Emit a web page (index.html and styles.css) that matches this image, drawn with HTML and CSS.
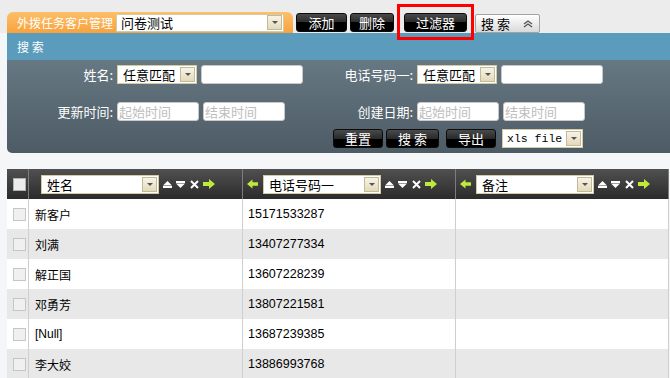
FILE: index.html
```html
<!DOCTYPE html>
<html lang="zh-CN">
<head>
    <meta charset="UTF-8" />
    <title>外拨任务客户管理</title>
    <link rel="stylesheet" href="styles.css">
</head>
<body>
    <!-- Top bar -->
    <div class="topbar">
        <div class="tab">
            <span class="tab-title">外拨任务客户管理</span>
            <div class="combo combo-task"><span class="combo-text">问卷测试</span><span class="combo-btn"></span></div>
        </div>
        <button class="btn btn-add">添加</button>
        <button class="btn btn-del">删除</button>
        <button class="btn btn-filter">过滤器</button>
        <div class="toggle">
            <span>搜 索</span>
            <svg width="10" height="8" viewBox="0 0 10 8"><path d="M1 4L5 1L9 4M1 7L5 4L9 7" fill="none" stroke="#555" stroke-width="1.4"/></svg>
        </div>
        <div class="highlight"></div>
    </div>

    <!-- Search panel -->
    <div class="searchbar">搜 索</div>
    <div class="panel">
        <div class="form-row">
            <span class="lbl">姓名:</span>
            <div class="fields">
                <div class="combo combo-match"><span class="combo-text">任意匹配</span><span class="combo-btn"></span></div>
                <div class="text-box"></div>
            </div>
            <span class="lbl">电话号码一:</span>
            <div class="fields">
                <div class="combo combo-match"><span class="combo-text">任意匹配</span><span class="combo-btn"></span></div>
                <div class="text-box"></div>
            </div>
        </div>
        <div class="form-row">
            <span class="lbl">更新时间:</span>
            <div class="fields">
                <div class="date-box">起始时间</div>
                <div class="date-box">结束时间</div>
            </div>
            <span class="lbl">创建日期:</span>
            <div class="fields">
                <div class="date-box">起始时间</div>
                <div class="date-box">结束时间</div>
            </div>
        </div>
        <div class="form-row actions">
            <button class="btn btn-reset">重置</button>
            <button class="btn btn-search">搜 索</button>
            <button class="btn btn-export">导出</button>
            <div class="combo combo-file"><span class="combo-text">xls file</span><span class="combo-btn"></span></div>
        </div>
    </div>

    <!-- Data grid -->
    <div class="grid">
        <div class="grid-row grid-head">
            <div><span class="check"></span></div>
            <div class="head-cell first">
                <div class="combo combo-col"><span class="combo-text">姓名</span><span class="combo-btn"></span></div>
                <svg class="ico" width="9" height="7" viewBox="0 0 9 7"><path d="M0 4.5L4.5 0L9 4.5Z" fill="#fff"/><rect y="5" width="9" height="2" fill="#fff"/></svg>
                <svg class="ico" width="9" height="7" viewBox="0 0 9 7"><rect width="9" height="2" fill="#fff"/><path d="M0 2.5L9 2.5L4.5 7Z" fill="#fff"/></svg>
                <svg class="ico x" width="9" height="9" viewBox="0 0 9 9"><path d="M1 1L8 8M8 1L1 8" stroke="#fff" stroke-width="2"/></svg>
                <svg class="ico" width="12" height="10" viewBox="0 0 12 10"><path d="M0 3H6V0L12 5L6 10V7H0Z" fill="#bfe93c"/></svg>
            </div>
            <div class="head-cell">
                <svg width="11" height="10" viewBox="0 0 12 10"><path d="M12 3H6V0L0 5L6 10V7H12Z" fill="#bfe93c"/></svg>
                <div class="combo combo-col"><span class="combo-text">电话号码一</span><span class="combo-btn"></span></div>
                <svg class="ico" width="9" height="7" viewBox="0 0 9 7"><path d="M0 4.5L4.5 0L9 4.5Z" fill="#fff"/><rect y="5" width="9" height="2" fill="#fff"/></svg>
                <svg class="ico" width="9" height="7" viewBox="0 0 9 7"><rect width="9" height="2" fill="#fff"/><path d="M0 2.5L9 2.5L4.5 7Z" fill="#fff"/></svg>
                <svg class="ico x" width="9" height="9" viewBox="0 0 9 9"><path d="M1 1L8 8M8 1L1 8" stroke="#fff" stroke-width="2"/></svg>
                <svg class="ico" width="12" height="10" viewBox="0 0 12 10"><path d="M0 3H6V0L12 5L6 10V7H0Z" fill="#bfe93c"/></svg>
            </div>
            <div class="head-cell">
                <svg width="11" height="10" viewBox="0 0 12 10"><path d="M12 3H6V0L0 5L6 10V7H12Z" fill="#bfe93c"/></svg>
                <div class="combo combo-col"><span class="combo-text">备注</span><span class="combo-btn"></span></div>
                <svg class="ico" width="9" height="7" viewBox="0 0 9 7"><path d="M0 4.5L4.5 0L9 4.5Z" fill="#fff"/><rect y="5" width="9" height="2" fill="#fff"/></svg>
                <svg class="ico" width="9" height="7" viewBox="0 0 9 7"><rect width="9" height="2" fill="#fff"/><path d="M0 2.5L9 2.5L4.5 7Z" fill="#fff"/></svg>
                <svg class="ico x" width="9" height="9" viewBox="0 0 9 9"><path d="M1 1L8 8M8 1L1 8" stroke="#fff" stroke-width="2"/></svg>
                <svg class="ico" width="12" height="10" viewBox="0 0 12 10"><path d="M0 3H6V0L12 5L6 10V7H0Z" fill="#bfe93c"/></svg>
            </div>
        </div>
        <div class="grid-row"><div><span class="check"></span></div><div class="name">新客户</div><div class="phone">15171533287</div><div></div></div>
        <div class="grid-row alt"><div><span class="check"></span></div><div class="name">刘满</div><div class="phone">13407277334</div><div></div></div>
        <div class="grid-row"><div><span class="check"></span></div><div class="name">解正国</div><div class="phone">13607228239</div><div></div></div>
        <div class="grid-row alt"><div><span class="check"></span></div><div class="name">邓勇芳</div><div class="phone">13807221581</div><div></div></div>
        <div class="grid-row"><div><span class="check"></span></div><div class="name latin">[Null]</div><div class="phone">13687239385</div><div></div></div>
        <div class="grid-row alt"><div><span class="check"></span></div><div class="name">李大姣</div><div class="phone">13886993768</div><div></div></div>
    </div>
</body>
</html>
```

FILE: styles.css
```css
/* Basic Styling */
* { box-sizing: border-box; }
body {
    margin: 0;
    background-color: #f4f6f7;
    color: #000;
    font-family: "Noto Sans CJK SC", "Liberation Sans", sans-serif;
    font-size: 12px;
    overflow: hidden;
}

/* Top bar */
.topbar {
    position: relative;
    display: flex;
    align-items: flex-start;
    height: 33px;
    padding: 12px 0 0 7px;
    background-color: #ececec;
}
.tab {
    display: flex;
    align-items: center;
    width: 286px;
    height: 21px;
    padding: 0 9px 0 10px;
    border-radius: 6px 6px 0 0;
    background: linear-gradient(#fdbf68, #f8a23e);
}
.tab-title {
    width: 99px;
    color: #fff;
    font-size: 12px;
    line-height: 15px;
    white-space: nowrap;
}

/* Combo boxes */
.combo {
    display: flex;
    align-items: center;
    height: 19px;
    padding: 1px;
    border: 1px solid #d3cba6;
    background-color: #fff;
    color: #000;
}
.combo-text {
    flex: 1;
    min-width: 0;
    padding-left: 3px;
    font-size: 13px;
    line-height: 15px;
    white-space: nowrap;
}
.combo-btn {
    display: flex;
    flex: none;
    align-items: center;
    justify-content: center;
    width: 15px;
    height: 15px;
    border: 1px solid #c4ba96;
    background: linear-gradient(#f8f3e6, #e3d9bc);
}
.combo-btn::after {
    content: "";
    border-left: 3px solid transparent;
    border-right: 3px solid transparent;
    border-top: 3px solid #555;
}
.combo-task { width: 168px; height: 18px; }
.combo-match { width: 80px; }
.combo-match .combo-text { padding-left: 4px; }
.combo-file { width: 81px; margin-left: 6px; }
.combo-file .combo-text { font-family: "Liberation Mono", monospace; font-size: 11.5px; padding-left: 3px; }
.combo-col { width: 118px; }
.combo-col .combo-text { padding-left: 4px; }

/* Buttons */
.btn {
    height: 19px;
    padding: 0;
    border: 1px solid #0c0c0c;
    border-radius: 3px;
    background: linear-gradient(#4a4a4a 0%, #2a2a2a 50%, #000 50%, #000 100%);
    color: #fff;
    font-family: inherit;
    font-size: 13px;
    line-height: 1;
    cursor: pointer;
}
.btn:hover { background: #333; }
.topbar .btn { margin-top: 1px; }
.btn-add { width: 51px; margin-left: 3px; }
.btn-del { width: 44px; margin-left: 3px; }
.btn-filter { width: 63px; margin-left: 10px; }
.btn-reset { width: 50px; }
.btn-search { width: 53px; margin-left: 3px; }
.btn-export { width: 50px; margin-left: 7px; }

.toggle {
    display: flex;
    align-items: center;
    justify-content: space-between;
    width: 65px;
    height: 19px;
    margin: 2px 0 0 8px;
    padding: 0 6px 0 5px;
    border: 1px solid #a3a3a3;
    border-radius: 2px;
    background: linear-gradient(#ffffff, #d9d9d9);
    font-size: 13px;
    line-height: 1;
}

/* Red marker round the filter button */
.highlight {
    position: absolute;
    left: 397px;
    top: 4px;
    width: 77px;
    height: 36px;
    border: 3px solid #f00;
}

/* Search panel */
.searchbar {
    height: 27px;
    margin-left: 7px;
    padding-left: 10px;
    background-color: #5b9bbb;
    color: #fff;
    font-size: 12px;
    line-height: 27px;
}
.panel {
    height: 93px;
    margin-left: 7px;
    padding-top: 5px;
    border-bottom-left-radius: 5px;
    background: linear-gradient(#667883, #4d5b65);
    color: #fff;
    font-size: 13px;
}
.form-row {
    display: flex;
    align-items: center;
    height: 19px;
}
.form-row + .form-row { margin-top: 18px; }
.form-row.actions { margin-top: 8px; padding-left: 326px; }
.lbl {
    width: 110px;
    padding-right: 4px;
    text-align: right;
    line-height: 15px;
    white-space: nowrap;
}
.fields {
    display: flex;
    gap: 4px;
    width: 190px;
}
.text-box {
    width: 102px;
    height: 19px;
    border: 1px solid #c9c9c9;
    border-radius: 3px;
    background-color: #fff;
}
.date-box {
    width: 82px;
    height: 19px;
    padding-left: 1px;
    border: 1px solid #c9c9c9;
    border-radius: 3px;
    background-color: #fff;
    color: #bdbdbd;
    font-size: 13px;
    line-height: 17px;
}

/* Data grid */
.grid {
    width: 662px;
    margin: 16px 0 0 7px;
}
.grid-row {
    display: grid;
    grid-template-columns: 22px 214px 213px 213px;
    height: 30px;
    background-color: #fff;
}
.grid-row.alt { background-color: #e8e8e8; }
.grid-row > div {
    display: flex;
    align-items: center;
    border-right: 1px solid #cfcfcf;
}
.grid-head { background: linear-gradient(#505050, #2b2b2b); }
.grid-head > div { border-right-color: #7c7c7c; }
.head-cell { gap: 5px; padding-left: 4px; }
.head-cell.first { padding-left: 12px; }
.head-cell .ico { margin-left: -1px; }
.head-cell .x { margin-left: 0; }
.check {
    width: 13px;
    height: 13px;
    margin-left: 6px;
    border: 1px solid #c6c6c6;
    background-color: #f0f0f0;
}
.grid-head .check { background-color: #ececec; border-color: #b0b0b0; }
.name { padding-left: 6px; font-size: 12px; }
.name.latin { font-family: "Liberation Sans", sans-serif; }
.phone {
    padding-left: 5px;
    font-family: "Liberation Sans", sans-serif;
    font-size: 12.5px;
}
```
